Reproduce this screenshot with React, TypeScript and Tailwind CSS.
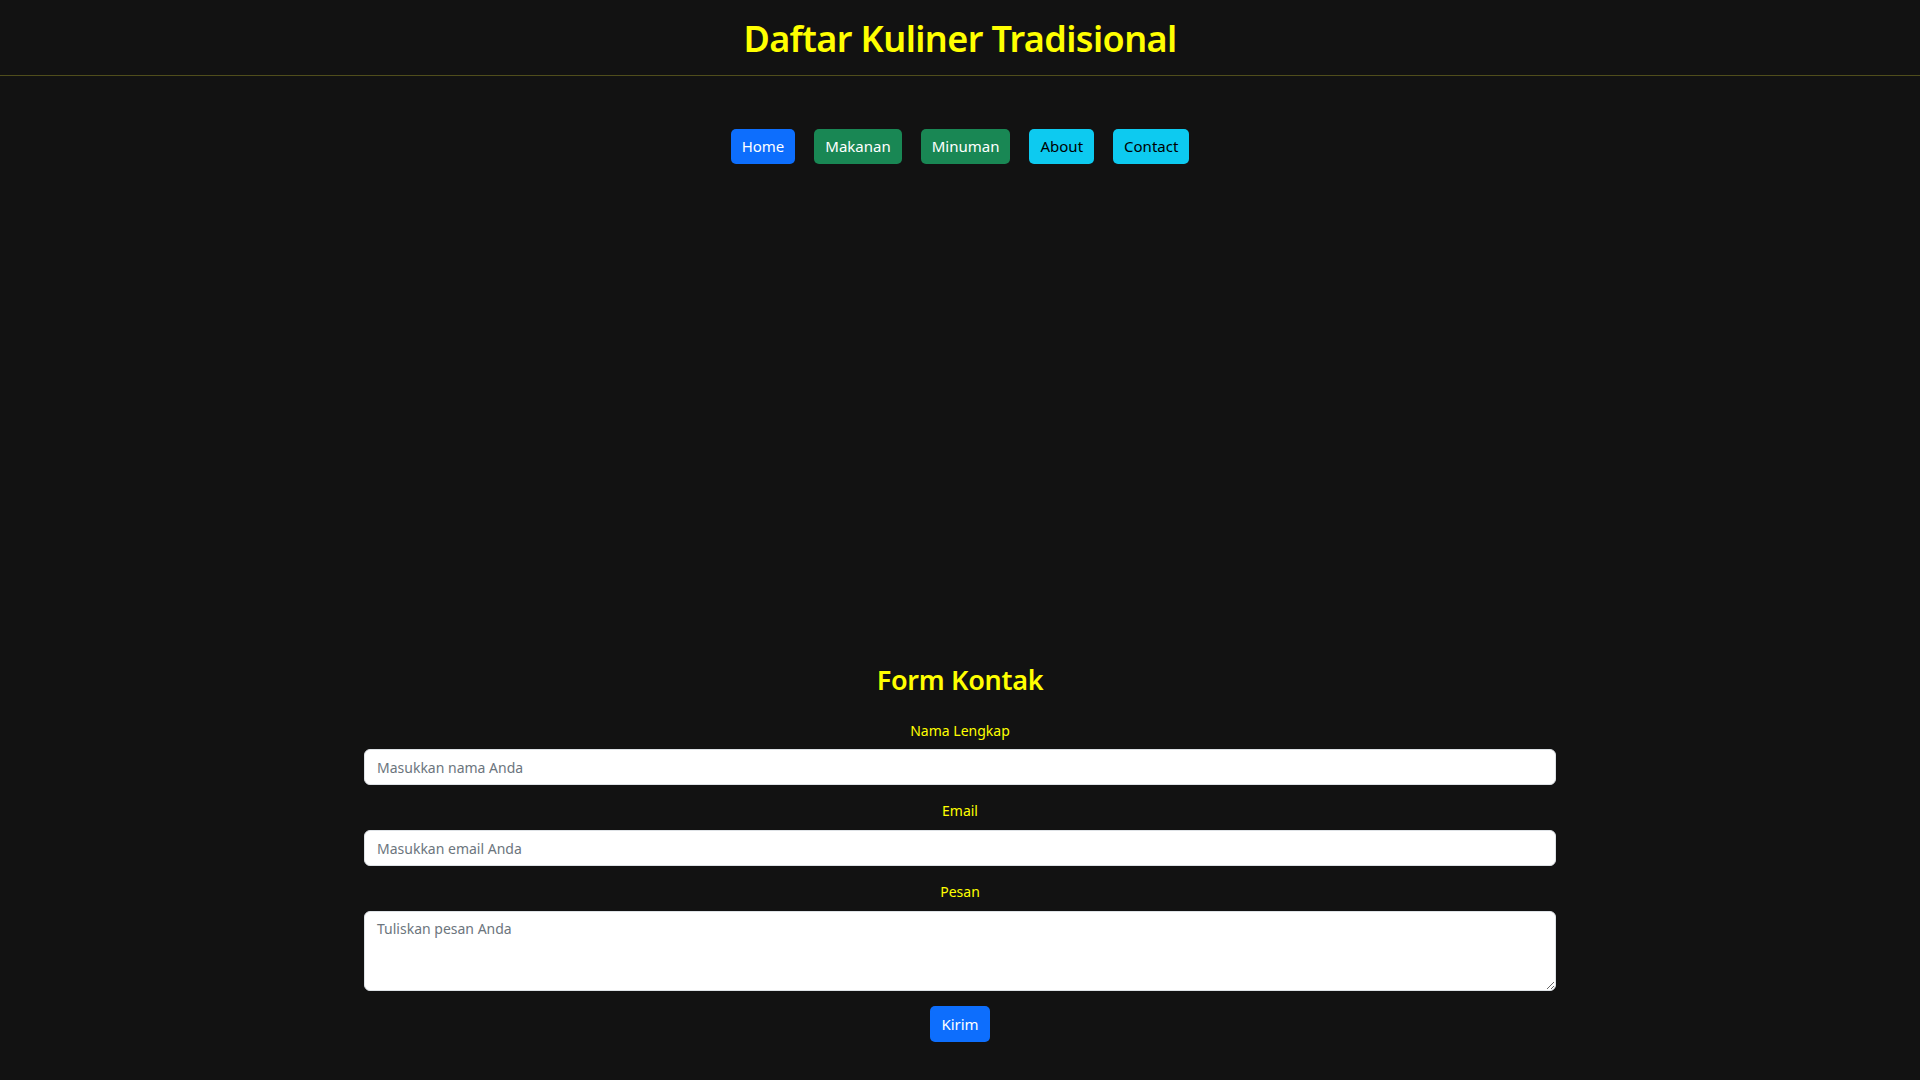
export default function App() {
  const font = { fontFamily: '"Noto Sans", "Open Sans", sans-serif' };
  return (
    <div className="min-h-screen w-full bg-[#121212]" style={font}>
      <header className="h-[76px] border-b border-[#4f4d1c] flex items-center justify-center">
        <h1 className="text-[36px] font-semibold text-[#ffff00] leading-none tracking-[-0.6px] pt-[3px]">
          Daftar Kuliner Tradisional
        </h1>
      </header>
      <nav className="flex justify-center gap-[19px] pt-[53px]">
        <button className="h-[35px] px-[11px] rounded-[5px] bg-[#0d6efd] text-white text-[15px]">Home</button>
        <button className="h-[35px] px-[11px] rounded-[5px] bg-[#198754] text-white text-[15px]">Makanan</button>
        <button className="h-[35px] px-[11px] rounded-[5px] bg-[#198754] text-white text-[15px]">Minuman</button>
        <button className="h-[35px] px-[11px] rounded-[5px] bg-[#0dcaf0] text-black text-[15px]">About</button>
        <button className="h-[35px] px-[11px] rounded-[5px] bg-[#0dcaf0] text-black text-[15px]">Contact</button>
      </nav>
      <section className="pt-[502px] flex flex-col items-center">
        <h2 className="text-[27px] font-semibold text-[#ffff00] leading-none tracking-[-0.3px]">Form Kontak</h2>
        <form className="w-[1192px] flex flex-col items-center mt-[28px]" onSubmit={(e) => e.preventDefault()}>
          <label className="text-[14px] text-[#ffff00] leading-[20px] mb-[8px]">Nama Lengkap</label>
          <input
            className="w-full h-[36px] bg-white rounded-[6px] border border-[#dee2e6] px-[12px] text-[14px] text-[#212529] placeholder:text-[#6c757d] outline-none"
            placeholder="Masukkan nama Anda"
          />
          <label className="text-[14px] text-[#ffff00] leading-[20px] mt-[16px] mb-[9px]">Email</label>
          <input
            className="w-full h-[36px] bg-white rounded-[6px] border border-[#dee2e6] px-[12px] text-[14px] text-[#212529] placeholder:text-[#6c757d] outline-none"
            placeholder="Masukkan email Anda"
          />
          <label className="text-[14px] text-[#ffff00] leading-[20px] mt-[16px] mb-[9px]">Pesan</label>
          <textarea
            className="w-full h-[80px] bg-white rounded-[6px] border border-[#dee2e6] px-[12px] py-[6px] text-[14px] text-[#212529] placeholder:text-[#6c757d] outline-none"
            placeholder="Tuliskan pesan Anda"
          />
          <button className="mt-[15px] h-[36px] px-[11px] rounded-[5px] bg-[#0d6efd] text-white text-[15px]">Kirim</button>
        </form>
      </section>
    </div>
  );
}
